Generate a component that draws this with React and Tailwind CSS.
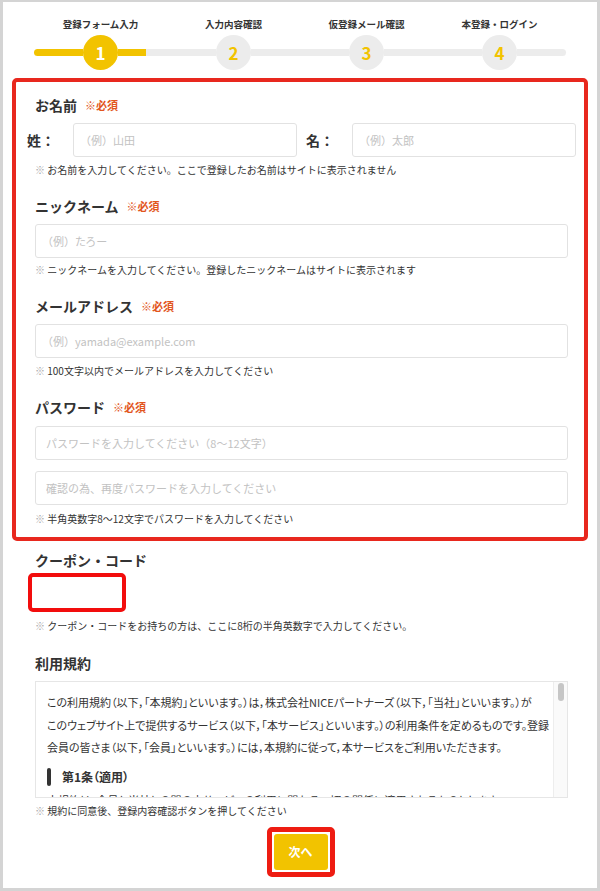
const STEPS = ['登録フォーム入力', '入力内容確認', '仮登録メール確認', '本登録・ログイン']

const FONT = "font-['Noto_Sans_CJK_JP','Noto_Sans',sans-serif]"

function Required() {
  return <span className="ml-[8px] text-[11px] font-bold text-[#e2561d]">※必須</span>
}

function Heading({ children, required, className = '' }) {
  return (
    <div className={`flex h-[22px] items-center pl-2 ${className}`}>
      <span className="text-[14px] font-bold text-[#333]">{children}</span>
      {required && <Required />}
    </div>
  )
}

function Note({ children, className = '' }) {
  return (
    <p className={`h-4 whitespace-nowrap pl-2 text-[10px] leading-4 text-[#333] ${className}`}>
      <span className="text-[#aaa]">※</span> {children}
    </p>
  )
}

function Field({ placeholder, className = '' }) {
  return (
    <input
      readOnly
      placeholder={placeholder}
      className={`h-[34px] rounded-[3px] border border-[#e2e2e2] bg-white px-[6px] text-[11px] outline-none placeholder:text-[#c2c2c2] ${className}`}
    />
  )
}

function Circle({ n, active }) {
  return (
    <div className={`flex h-[35px] w-[35px] shrink-0 items-center justify-center rounded-full text-[17px] font-bold ${active ? 'bg-[#f2c300] text-white' : 'bg-[#ececec] text-[#f2c300]'}`}>
      {n}
    </div>
  )
}

function Stepper() {
  return (
    <div className="ml-[31px] w-[532px] pt-[15px]">
      <div className="grid grid-cols-4">
        {STEPS.map(s => (
          <div key={s} className="h-[14px] text-center text-[9.5px] font-bold leading-[14px] text-[#333]">{s}</div>
        ))}
      </div>
      <div className="mt-[4px] flex items-center">
        <div className="h-[7px] w-[49px] rounded-l-full bg-[#f2c300]" />
        <Circle n="1" active />
        <div className="flex h-[7px] w-[98px]">
          <div className="w-[28px] bg-[#f2c300]" />
          <div className="flex-1 bg-[#ececec]" />
        </div>
        <Circle n="2" />
        <div className="h-[7px] w-[98px] bg-[#ececec]" />
        <Circle n="3" />
        <div className="h-[7px] w-[98px] bg-[#ececec]" />
        <Circle n="4" />
        <div className="h-[7px] w-[49px] rounded-r-full bg-[#ececec]" />
      </div>
    </div>
  )
}

function Terms() {
  return (
    <div className="ml-[32px] mt-[7px] flex h-[117px] w-[533px] overflow-hidden border border-[#e6e6e6] bg-white">
      <div className="flex-1 overflow-hidden pl-[11px] pt-[9px] text-[11px] leading-[22.5px] whitespace-nowrap text-[#333] [font-feature-settings:'palt']">
        <p>この利用規約（以下，「本規約」といいます。）は，株式会社NICEパートナーズ（以下，「当社」といいます。）が</p>
        <p>このウェブサイト上で提供するサービス（以下，「本サービス」といいます。）の利用条件を定めるものです。登録</p>
        <p>会員の皆さま（以下，「会員」といいます。）には，本規約に従って，本サービスをご利用いただきます。</p>
        <div className="mt-[7px] flex items-center">
          <span className="h-[18px] w-[4px] rounded-full bg-[#333]" />
          <span className="ml-[11px] text-[12px] font-bold">第1条（適用）</span>
        </div>
        <p className="mt-[1px]">本規約は，会員と当社との間の本サービスの利用に関わる一切の関係に適用されるものとします。</p>
      </div>
      <div className="w-[14px] border-l border-[#ededed] bg-[#fafafa] pt-[1px]">
        <div className="mx-auto h-[18px] w-[6px] rounded-full bg-[#c6c6c6]" />
      </div>
    </div>
  )
}

export default function App() {
  return (
    <div className={`h-[891px] w-[600px] overflow-hidden border-x-[3px] border-t-[2px] border-b-[3px] border-[#d4d4d4] bg-white ${FONT}`}>
      <Stepper />

      <div className="ml-[9px] mt-[8px] w-[576px] rounded-[5px] border-4 border-[#e8281e] pb-[10px] pl-[11px] pr-[8px] pt-[12px]">
        <Heading required>お名前</Heading>
        <div className="mt-[7px] flex items-center">
          <span className="w-[46px] text-[14px] font-bold text-[#333]">姓：</span>
          <Field className="w-[224px]" placeholder="（例）山田" />
          <span className="ml-[9px] w-[46px] text-[14px] font-bold text-[#333]">名：</span>
          <Field className="w-[224px]" placeholder="（例）太郎" />
        </div>
        <Note className="mt-[5px]">お名前を入力してください。ここで登録したお名前はサイトに表示されません</Note>

        <Heading required className="mt-[17px]">ニックネーム</Heading>
        <Field className="ml-2 mt-[7px] w-[533px]" placeholder="（例）たろー" />
        <Note className="mt-[4px]">ニックネームを入力してください。登録したニックネームはサイトに表示されます</Note>

        <Heading required className="mt-[17px]">メールアドレス</Heading>
        <Field className="ml-2 mt-[7px] w-[533px]" placeholder="（例）yamada@example.com" />
        <Note className="mt-[5px]">100文字以内でメールアドレスを入力してください</Note>

        <Heading required className="mt-[17px]">パスワード</Heading>
        <Field className="ml-2 mt-[8px] w-[533px] px-[10px]" placeholder="パスワードを入力してください（8〜12文字）" />
        <Field className="ml-2 mt-[11px] w-[533px] px-[10px]" placeholder="確認の為、再度パスワードを入力してください" />
        <Note className="mt-[6px]">半角英数字8〜12文字でパスワードを入力してください</Note>
      </div>

      <div className="ml-[24px] mt-[8px] flex h-[22px] items-center pl-2">
        <span className="text-[14px] font-bold text-[#333]">クーポン・コード</span>
      </div>
      <div className="ml-[25px] mt-[2px] h-[39px] w-[98px] rounded-[5px] border-4 border-[#f20d0d] bg-white" />
      <Note className="ml-[24px] mt-[6px]">クーポン・コードをお持ちの方は、ここに8桁の半角英数字で入力してください。</Note>

      <div className="ml-[24px] mt-[18px] flex h-[22px] items-center pl-2">
        <span className="text-[14px] font-bold text-[#333]">利用規約</span>
      </div>
      <Terms />
      <Note className="ml-[24px] mt-[5px]">規約に同意後、登録内容確認ボタンを押してください</Note>

      <div className="mt-[8px] flex justify-center">
        <div className="ml-[1px] rounded-[5px] border-[5px] border-[#ee1c12] bg-white p-[2px]">
          <button className="flex h-[36px] w-[54px] items-center justify-center rounded-[3px] bg-[#f2c300] text-[12px] font-bold text-white">
            次へ
          </button>
        </div>
      </div>
    </div>
  )
}
